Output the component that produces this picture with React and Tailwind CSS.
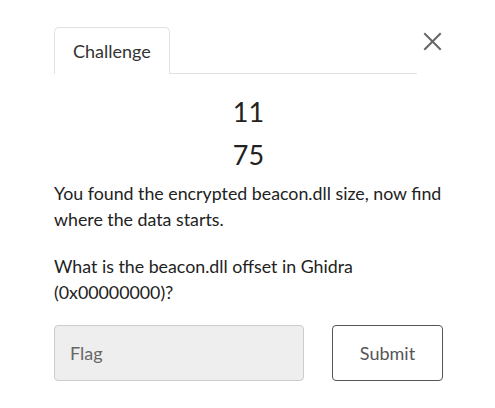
import React, { useState } from "react";

const App = () => {
  const [flag, setFlag] = useState("");

  return (
    <div className="min-h-screen bg-white pt-[27px] pl-[54px] pr-[52px] font-['Lato',sans-serif] text-[#222]">
      {/* Header with tab and close */}
      <div className="flex items-start">
        <div className="flex flex-1 border-b border-[#dee2e6] mr-[5px]">
          <div className="h-[47px] -mb-px flex items-center px-[18px] border border-b-0 border-[#dee2e6] rounded-t-[5px] bg-white text-[18px] leading-[26px] text-[#333]">
            Challenge
          </div>
        </div>
        <button className="mt-[4px] w-[21px] h-[21px] flex items-center justify-center text-[#666]">
          <svg width="19" height="19" viewBox="0 0 19 19" fill="none" stroke="currentColor" strokeWidth="2" strokeLinecap="square">
            <path d="M2 2 L17 17 M17 2 L2 17" />
          </svg>
        </button>
      </div>

      {/* Challenge values */}
      <div className="text-center mt-[22px] text-[27px] leading-[32px] text-[#222]">
        <h3>11</h3>
        <h3 className="mt-[11px]">75</h3>
      </div>

      {/* Description */}
      <p className="mt-[9px] -mr-[12px] text-[17.8px] leading-[26px]">
        You found the encrypted beacon.dll size, now find where the data starts.
      </p>
      <p className="mt-[21px] -mr-[12px] text-[17.8px] leading-[26px]">
        What is the beacon.dll offset in Ghidra (0x00000000)?
      </p>

      {/* Answer form */}
      <div className="mt-[20px] flex items-center">
        <input
          value={flag}
          onChange={(e) => setFlag(e.target.value)}
          placeholder="Flag"
          className="w-[250px] h-[56px] px-[15px] rounded-[4px] border border-[#ccc] bg-[#eeeeee] text-[18px] text-[#555] placeholder:text-[#666] outline-none"
        />
        <button className="ml-[28px] w-[111px] h-[56px] rounded-[4px] border border-[#555] bg-white text-[18px] text-[#555]">
          Submit
        </button>
      </div>
    </div>
  );
};

export default App;
